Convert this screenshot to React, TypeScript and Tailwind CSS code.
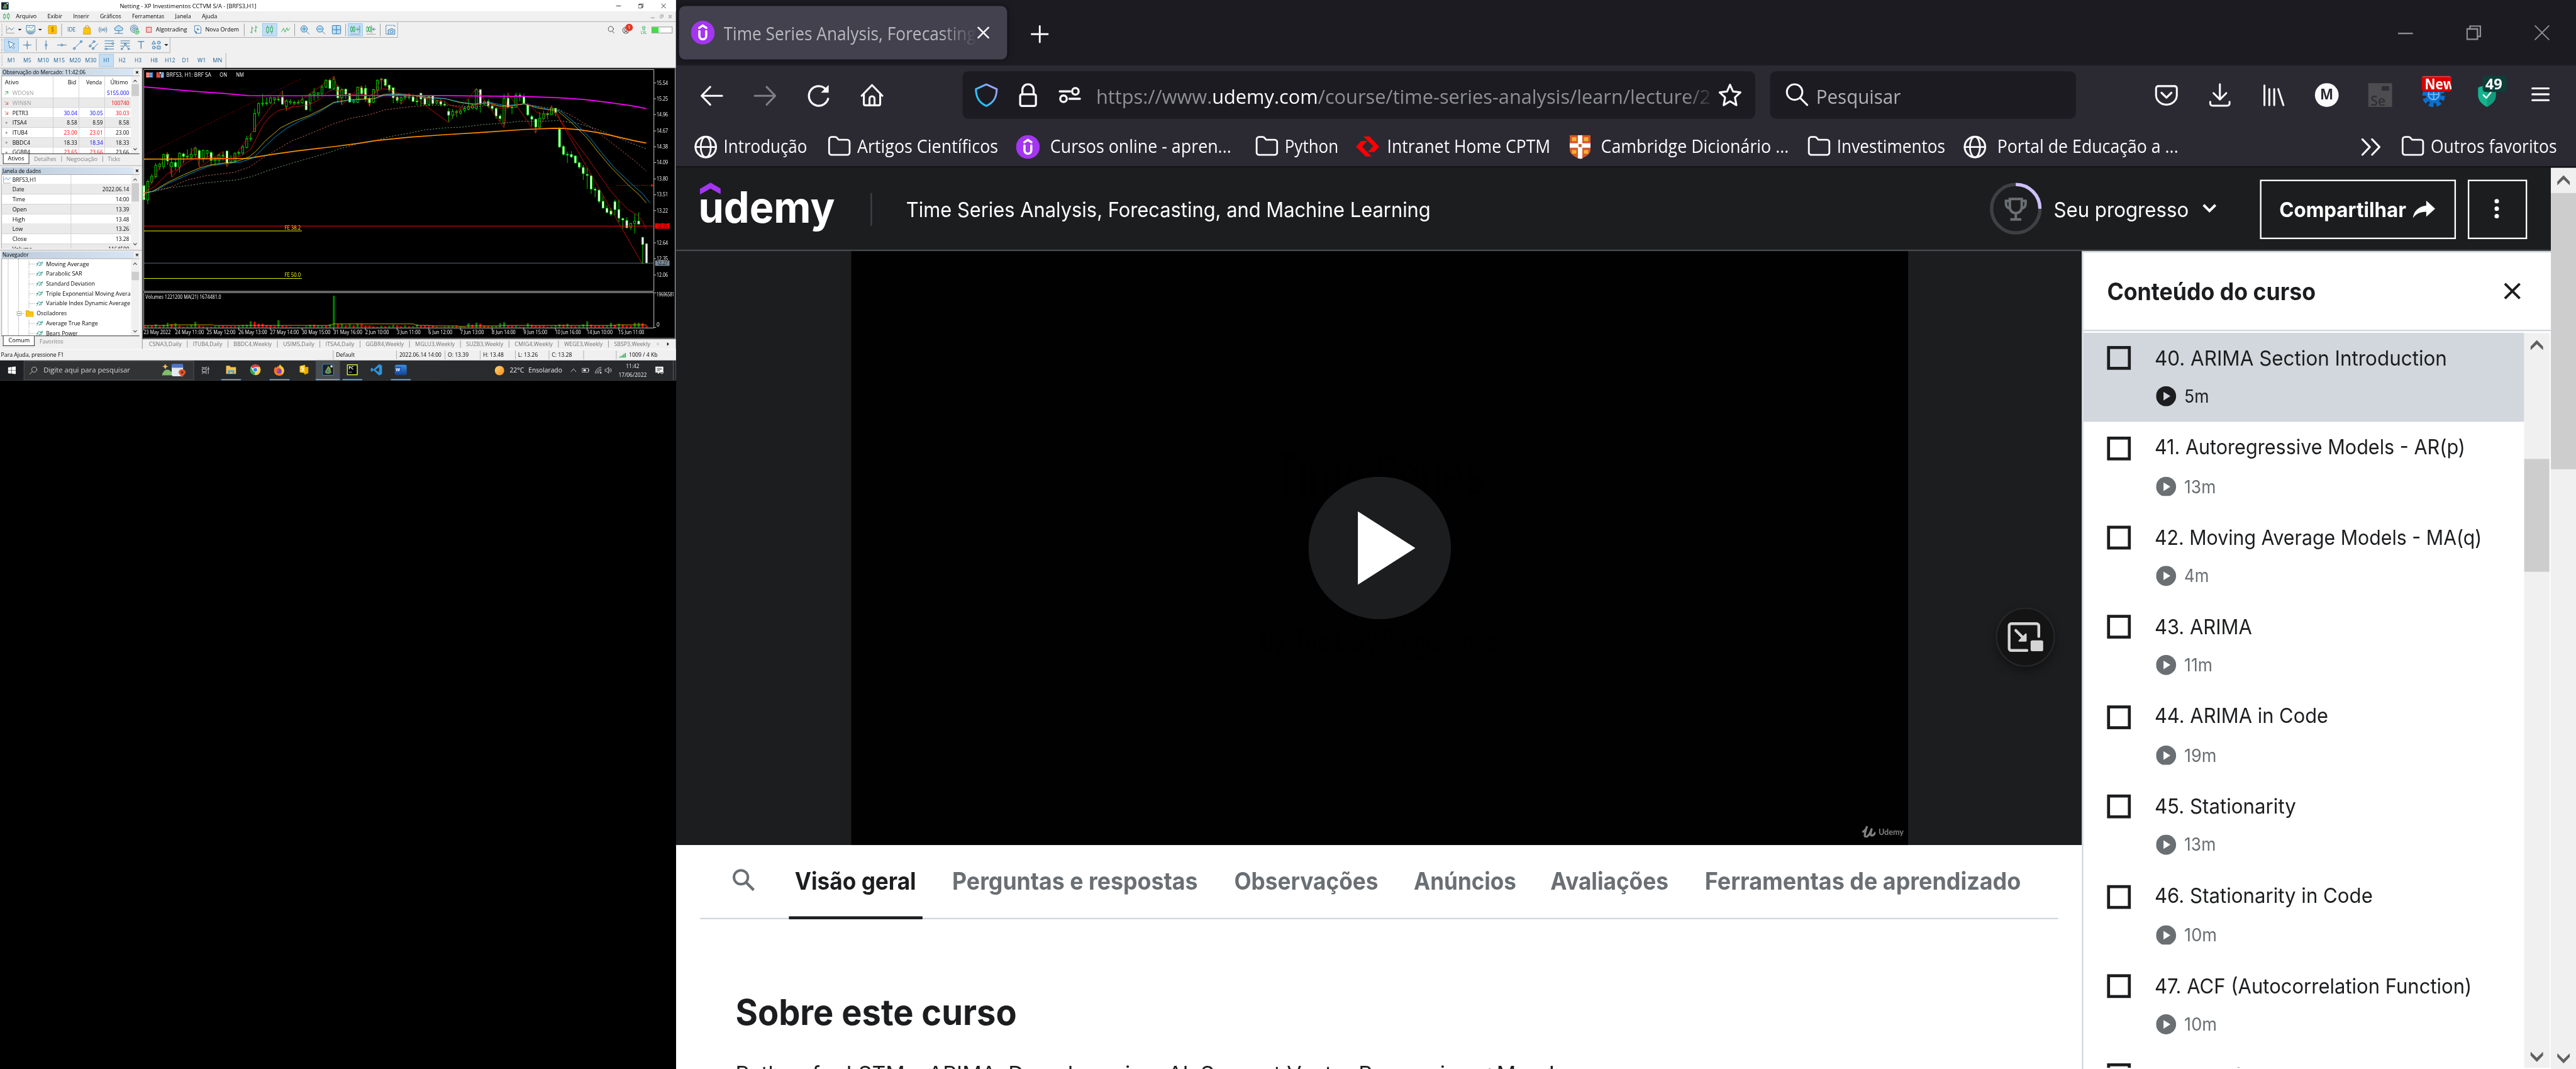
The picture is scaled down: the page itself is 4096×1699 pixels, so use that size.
import React, { useLayoutEffect, useRef, useState } from "react";

/* ------------------------------------------------------------------ */
/* Shared helpers                                                      */
/* ------------------------------------------------------------------ */

/** One line of text condensed or expanded to an exact width. */
function Fit({ w, children, className = "" }: { w: number; children: React.ReactNode; className?: string }) {
  const outer = useRef<HTMLSpanElement>(null);
  const inner = useRef<HTMLSpanElement>(null);
  const [ratio, setRatio] = useState(1);
  useLayoutEffect(() => {
    const o = outer.current!.getBoundingClientRect().width;
    const i = inner.current!.getBoundingClientRect().width;
    if (i > 0) setRatio(o / i);
  }, []);
  return (
    <span ref={outer} className={`block shrink-0 whitespace-nowrap ${className}`} style={{ width: w }}>
      <span ref={inner} className="inline-block origin-left" style={{ transform: `scaleX(${ratio})` }}>
        {children}
      </span>
    </span>
  );
}

function Svg({ box = "0 0 16 16", className = "", children }: { box?: string; className?: string; children: React.ReactNode }) {
  return (
    <svg viewBox={box} className={`block shrink-0 ${className}`} fill="none" stroke="currentColor" strokeWidth={1} strokeLinecap="round" strokeLinejoin="round">
      {children}
    </svg>
  );
}

/* ------------------------------------------------------------------ */
/* Trading terminal: chart                                             */
/* ------------------------------------------------------------------ */

type P = [number, number];

// Prices are kept on a grid of 2.24 columns and 3 rows per pixel;
// the second half of every series starts again at x = 680.
const px = (x: number, half: 0 | 1) => 680 * half + x / 2.24;
const line = (left: P[], right: P[]) =>
  [...left.map(([x, y]) => `${px(x, 0).toFixed(1)},${(y / 3).toFixed(1)}`), ...right.map(([x, y]) => `${px(x, 1).toFixed(1)},${(y / 3).toFixed(1)}`)].join(" ");

const YELLOW = line(
  [[651, 1170], [690, 1160], [760, 1105], [830, 1060], [900, 1020], [950, 1000], [1010, 988], [1060, 982], [1100, 965], [1130, 948], [1160, 915], [1200, 855], [1270, 775], [1330, 735], [1400, 700], [1460, 660], [1510, 620]],
  [[0, 617], [60, 605], [130, 598], [170, 598], [215, 572], [260, 568], [340, 578], [400, 588], [490, 597], [560, 622], [620, 632], [690, 622], [740, 645], [800, 640], [850, 630], [910, 655], [960, 665], [1000, 670], [1060, 738], [1130, 830], [1190, 930], [1240, 1010], [1320, 1120], [1370, 1180], [1403, 1230]],
);
const BLUE = line(
  [[660, 1170], [700, 1158], [760, 1112], [840, 1065], [900, 1030], [950, 1005], [1030, 990], [1090, 982], [1150, 955], [1190, 900], [1250, 825], [1300, 775], [1370, 725], [1430, 690], [1510, 625]],
  [[0, 621], [60, 607], [170, 600], [230, 572], [330, 576], [400, 590], [500, 600], [560, 618], [620, 630], [700, 622], [760, 640], [850, 630], [920, 650], [960, 663], [1010, 668], [1080, 745], [1150, 840], [1200, 925], [1260, 1020], [1340, 1120], [1385, 1172], [1420, 1230]],
);
const RED_MA = line(
  [[651, 1170], [700, 1130], [760, 1050], [800, 1030], [850, 980], [884, 960], [902, 962], [940, 950], [1000, 957], [1045, 962], [1090, 945], [1135, 905], [1160, 840], [1190, 760], [1220, 710], [1260, 670], [1320, 650], [1400, 635], [1450, 600], [1480, 560], [1510, 540]],
  [[0, 550], [35, 552], [70, 578], [100, 565], [150, 580], [190, 548], [210, 538], [245, 542], [280, 565], [330, 573], [400, 595], [490, 615], [510, 635], [560, 655], [600, 650], [650, 628], [690, 625], [740, 658], [780, 648], [850, 625], [880, 640], [905, 680], [930, 690], [1000, 685], [1010, 720], [1060, 820], [1130, 945], [1190, 1060], [1240, 1155], [1270, 1202], [1320, 1270], [1365, 1305], [1385, 1340], [1403, 1390]],
);
const ZIGZAG = line(
  [[651, 1197], [757, 925], [778, 1075], [884, 890], [902, 1015], [1009, 918], [1027, 1010], [1278, 552], [1297, 670], [1512, 463]],
  [[24, 637], [113, 520], [149, 645], [203, 473], [293, 632], [328, 567], [507, 742], [633, 537], [758, 773], [776, 563], [901, 807], [973, 640], [1130, 1005], [1260, 1310], [1385, 1600]],
);
const SALMON = line(
  [[660, 1170], [750, 1145], [850, 1090], [930, 1065], [1060, 1045], [1130, 1012], [1180, 965], [1230, 925], [1320, 855], [1440, 790], [1510, 750]],
  [[0, 745], [60, 718], [150, 695], [220, 665], [330, 648], [420, 638], [500, 637], [620, 650], [700, 635], [780, 645], [850, 630], [960, 655], [1000, 660], [1070, 705], [1150, 770], [1250, 870], [1350, 975], [1403, 1037]],
);
const SAGE = line(
  [[651, 1170], [740, 1142], [850, 1125], [920, 1110], [1070, 1090], [1135, 1072], [1210, 1035], [1330, 985], [1450, 940], [1510, 915]],
  [[0, 907], [100, 870], [170, 855], [240, 828], [330, 807], [400, 787], [490, 775], [570, 770], [660, 755], [740, 748], [830, 735], [940, 735], [1000, 730], [1100, 750], [1160, 775], [1240, 815], [1320, 860], [1403, 902]],
);
const MAGENTA = "291,175.5 322,178 350,181 400,185 450,188.5 500,193 600,193.5 690,192.7 890,193 980,194 1060,195 1130,197.5 1180,201 1230,207 1275,213.5 1306,219";
const ORANGE = "291,321.5 500,320 550,312 600,305 650,299 680,295.5 722,290 760,284 830,277 900,272 980,267 1060,261.5 1120,259 1140,259.5 1170,262 1210,268 1250,277 1280,284 1306,289";
const VOLUME_MA = line(
  [[651, 1972], [765, 1972], [767, 1969], [965, 1969], [967, 1972], [1495, 1972], [1510, 1963]],
  [[0, 1963], [348, 1963], [362, 1972], [425, 1972], [430, 1975], [550, 1975], [555, 1978], [585, 1978], [588, 1975], [745, 1975], [750, 1972], [1265, 1972], [1270, 1969], [1403, 1969]],
);

// high, body top, body bottom, low, falling (1) or rising (0)
const CANDLES: [number, number, number, number, 0 | 1][] = [
  [1118, 1125, 1210, 1212, 1], [1090, 1100, 1212, 1238, 0], [1055, 1068, 1103, 1112, 0], [988, 1003, 1070, 1082, 0], [985, 995, 1010, 1030, 0],
  [930, 937, 1010, 1025, 0], [925, 935, 975, 1000, 1], [955, 985, 1010, 1070, 0], [960, 985, 1010, 1030, 1], [922, 928, 1012, 1045, 0],
  [925, 933, 948, 990, 1], [905, 947, 951, 965, 1], [897, 935, 953, 960, 0], [888, 897, 937, 955, 0], [905, 913, 963, 1012, 1],
  [905, 912, 960, 985, 0], [908, 912, 930, 958, 0], [915, 925, 972, 1000, 1], [955, 965, 973, 1000, 0], [930, 940, 972, 990, 0],
  [918, 942, 946, 975, 0], [915, 915, 990, 1010, 1], [940, 963, 985, 990, 0], [922, 930, 975, 985, 0], [915, 925, 930, 945, 0],
  [880, 890, 927, 940, 0], [822, 840, 893, 900, 0], [808, 838, 843, 858, 0], [660, 688, 797, 797, 0], [620, 628, 686, 705, 0],
  [570, 625, 630, 645, 0], [590, 623, 628, 640, 0], [585, 594, 622, 632, 0], [590, 592, 603, 632, 0], [580, 602, 605, 615, 0],
  [550, 590, 632, 635, 1], [600, 612, 645, 672, 0], [600, 615, 622, 635, 0], [610, 620, 625, 637, 0], [605, 620, 625, 635, 0],
  [585, 603, 622, 630, 0], [610, 612, 665, 668, 1], [565, 572, 625, 675, 0], [533, 560, 575, 610, 0], [560, 563, 570, 600, 0],
  [515, 527, 570, 570, 0], [480, 487, 527, 535, 0], [478, 487, 535, 538, 1], [462, 480, 535, 548, 0], [515, 527, 592, 620, 1],
  [535, 543, 592, 635, 0], [535, 541, 570, 600, 1], [565, 567, 618, 622, 1], [600, 612, 620, 628, 0], [525, 528, 620, 625, 0],
  [518, 532, 568, 575, 1], [515, 535, 600, 618, 1], [585, 598, 622, 645, 1], [538, 543, 620, 625, 0], [480, 487, 545, 575, 0],
  [472, 478, 482, 540, 0], [480, 480, 517, 527, 1], [512, 517, 545, 560, 1], [530, 532, 592, 625, 1], [575, 590, 608, 625, 1],
  [585, 592, 608, 632, 0], [575, 585, 592, 605, 0], [565, 587, 592, 605, 0], [570, 587, 614, 618, 1], [580, 613, 617, 637, 1],
  [562, 565, 600, 640, 1], [575, 595, 632, 637, 1], [578, 585, 633, 643, 0], [575, 580, 627, 637, 1], [605, 612, 625, 635, 0],
  [600, 616, 632, 645, 1], [613, 632, 637, 645, 1], [655, 675, 698, 740, 1], [660, 676, 698, 720, 0], [665, 677, 682, 710, 0],
  [660, 673, 686, 695, 0], [645, 658, 668, 682, 0], [600, 645, 662, 670, 0], [625, 640, 655, 662, 0], [535, 543, 657, 668, 0],
  [540, 543, 632, 683, 1], [610, 617, 630, 640, 0], [600, 615, 642, 655, 1], [632, 642, 657, 670, 1], [650, 657, 703, 720, 1],
  [690, 703, 718, 735, 1], [570, 595, 748, 770, 0], [562, 595, 650, 660, 1], [640, 650, 653, 692, 0], [562, 577, 650, 650, 0],
  [562, 577, 583, 615, 1], [568, 585, 628, 633, 1], [625, 637, 695, 705, 1], [695, 706, 722, 765, 1], [718, 723, 770, 805, 1],
  [680, 717, 771, 775, 0], [672, 691, 718, 725, 0], [680, 690, 694, 722, 1], [640, 655, 695, 695, 0], [655, 656, 682, 705, 1],
  [772, 783, 890, 897, 1], [877, 888, 935, 945, 1], [920, 935, 939, 988, 1], [915, 937, 950, 958, 1], [945, 945, 987, 990, 1],
  [982, 987, 1013, 1025, 1], [1000, 1015, 1052, 1090, 1], [1017, 1057, 1063, 1145, 1], [1060, 1066, 1145, 1175, 1], [1135, 1147, 1152, 1195, 1],
  [1150, 1152, 1220, 1233, 1], [1188, 1220, 1260, 1265, 1], [1243, 1262, 1287, 1293, 1], [1262, 1278, 1298, 1310, 1], [1210, 1222, 1270, 1305, 1],
  [1213, 1270, 1322, 1347, 1], [1318, 1325, 1333, 1385, 1], [1317, 1336, 1380, 1383, 1], [1350, 1354, 1377, 1393, 0], [1295, 1340, 1354, 1415, 0],
  [1287, 1340, 1358, 1358, 1], [1437, 1438, 1482, 1600, 1], [1475, 1477, 1594, 1595, 1],
];

const VOLUMES =
  "9r 11g 13r 21g 9r 18g 30g 21r 27g 12r 6r 9g 17g 36g 12r 9r 6g 6r 9g 12g 12r 9r 9r 9r 12g 17g 18g 39g 36r 24r 24r 14r 14r 9r 45g 12r 9r 6r 3r 6g 3r 9g 18g 18r 14g 12g 13r 21g 194g 21r 22g 14r 21g 14r 22g 22r 14r 14r 9r 6r 12g 9r 12g 18g 14r 9r 15g 9r 9g 21g 12r 12r 12r 12r 6r 3r 6g 9g 10g 10r 6g 3r 27g 18r 30g 24r 12r 9r 9g 9g 27g 33g 12r 12r 12g 6r 6g 27g 18r 12r 12r 12r 6r 9g 14g 21g 18r 24g 12r 9r 13g 21g 39g 18r 12r 12r 12r 14g 30g 18r 24g 18r 12r 12r 30g 30g 27r 12r".split(" ");

const PRICES: [string, number][] = [
  ["15.54", 167], ["15.25", 199], ["14.96", 231], ["14.67", 264], ["14.38", 296], ["14.09", 328], ["13.80", 361],
  ["13.51", 393], ["13.22", 425], ["12.64", 490], ["12.35", 522], ["12.06", 555],
];

const DATES: [string, number][] = [
  ["23 May 2022", 55], ["24 May 11:00", 58], ["25 May 12:00", 58], ["26 May 13:00", 58], ["27 May 14:00", 58], ["30 May 15:00", 58],
  ["31 May 16:00", 58], ["2 Jun 10:00", 48], ["3 Jun 11:00", 48], ["6 Jun 12:00", 48], ["7 Jun 13:00", 48], ["8 Jun 14:00", 48],
  ["9 Jun 15:00", 48], ["10 Jun 16:00", 52], ["14 Jun 10:00", 52], ["15 Jun 11:00", 52],
];

function PriceChart() {
  return (
    <svg viewBox="287 137 1079 548" className="block h-[548px] w-[1079px] bg-black font-['Open_Sans',sans-serif] text-[10.500px] font-medium" fill="none">
      <g stroke="#fff">
        <path d="M290.5 662.5V591H1321.5V662.5H290.5M290.5 588.5V140.5H1321.5V588.5H290.5" />
        {PRICES.map(([p, y]) => <path key={p} d={`M1322 ${y + 0.5}h4`} />)}
        {DATES.map(([d], i) => <path key={d} d={`M${290.5 + i * 64} 663v4`} />)}
        <path d="M1322 591.5h4M1322 661.5h4" />
      </g>
      {CANDLES.map(([h, t, b, l, down], i) => {
        const x = 290.7 + i * 8;
        return (
          <g key={i} stroke="#00ff00">
            <path d={`M${x} ${h / 3}V${l / 3}`} />
            <rect x={x - 2} y={t / 3} width={4} height={Math.max(1, (b - t) / 3)} fill={down ? "#fff" : "#000"} />
          </g>
        );
      })}
      <path d="M292 313.5L607 159.5" stroke="#f00" strokeDasharray="2 4" />
      <polyline points={SALMON} stroke="#f08070" strokeDasharray="3 3" />
      <polyline points={SAGE} stroke="#8fbc8f" strokeDasharray="3 3" />
      <polyline points={MAGENTA} stroke="#ff00ff" strokeWidth={2.2} />
      <polyline points={ORANGE} stroke="#ff8c00" strokeWidth={2.2} />
      <polyline points={YELLOW} stroke="#ffd700" />
      <polyline points={BLUE} stroke="#00b4ff" />
      <polyline points={RED_MA} stroke="#f01010" />
      <polyline points={ZIGZAG} stroke="#f01010" />
      <path d="M291 466.5H610M291 562.5H610" stroke="#ff0" strokeWidth={1.2} />
      <text x={575} y={463.5} textLength={33} lengthAdjust="spacingAndGlyphs" fill="#ff0">FE 38.2</text>
      <text x={575} y={559.5} textLength={33} lengthAdjust="spacingAndGlyphs" fill="#ff0">FE 50.0</text>
      <path d="M291 456.5H1326" stroke="#f00" strokeWidth={1.3} />
      <path d="M291 531.5H1321" stroke="#778899" />
      <path d="M1246 374.5H1318" stroke="#f00" strokeDasharray="3 2" />
      <path d="M1316 371l5 3.5l-5 3.5z" fill="#f00" />
      {VOLUMES.map((v, i) => {
        const h = parseInt(v) / 3;
        return <rect key={i} x={i === 0 ? 291 : 288.7 + i * 8} y={662 - h} width={4} height={h} fill={v.endsWith("g") ? "#008000" : "#f00"} />;
      })}
      <polyline points={VOLUME_MA} stroke="#ffd700" />
      <g fill="#fff">
        {PRICES.map(([p, y]) => <text key={p} x={1327} y={y + 4} textLength={23} lengthAdjust="spacingAndGlyphs">{p}</text>)}
        <text x={1327} y={599} textLength={36} lengthAdjust="spacingAndGlyphs">19696581</text>
        <text x={1327} y={660}>0</text>
        {DATES.map(([d, w], i) => <text key={d} x={290 + i * 64} y={675.5} textLength={w} lengthAdjust="spacingAndGlyphs">{d}</text>)}
        <text x={336} y={155.5} textLength={91} lengthAdjust="spacingAndGlyphs">BRFS3, H1: BRF SA</text>
        <text x={444} y={155.5} textLength={15} lengthAdjust="spacingAndGlyphs">ON</text>
        <text x={477} y={155.5} textLength={16} lengthAdjust="spacingAndGlyphs">NM</text>
        <text x={294} y={603.5} textLength={153} lengthAdjust="spacingAndGlyphs">Volumes 1221200 MA(21) 1674481.0</text>
      </g>
      <rect x={1324} y={451} width={29} height={11} fill="#f00" />
      <text x={1327} y={460.5} textLength={23} lengthAdjust="spacingAndGlyphs" fill="#000">12.95</text>
      <rect x={1324} y={526} width={29} height={11} fill="#778899" />
      <text x={1327} y={535.5} textLength={23} lengthAdjust="spacingAndGlyphs" fill="#000">12.27</text>
      <path d="M295 146h7v11h-7z" fill="#e04a3f" />
      <path d="M302 146h7v11h-7z" fill="#1d6fb8" />
      <path d="M296 148.5h12M296 151.5h12M296 154.5h12" stroke="#fff" />
      <path d="M316 146h5v4h3v7h-8z" fill="#e04a3f" />
      <path d="M325 150h2v-4h4v11h-6z" fill="#7cc0ee" />
      <path d="M322 146h4v3h-4z" fill="#fff" />
      <path d="M287.5 137V685M1364.5 137V685M289 683.5H1364" stroke="#e8e8e8" />
      <path d="M287 137.5H1366" stroke="#808080" />
    </svg>
  );
}

/* ------------------------------------------------------------------ */
/* Trading terminal: toolbars                                          */
/* ------------------------------------------------------------------ */

function Cell({ active, children, className = "w-8" }: { active?: boolean; children: React.ReactNode; className?: string }) {
  return (
    <div className={`flex h-[26px] shrink-0 items-center justify-center ${className}`}>
      <div className={`flex h-[26px] items-center justify-center px-[3px] ${active ? "min-w-[30px] border border-[#8cc4f0] bg-[#c4def4]" : ""}`}>{children}</div>
    </div>
  );
}

const Sep = ({ className = "" }: { className?: string }) => <div className={`h-[25px] w-px shrink-0 bg-[#8a8a8a] ${className}`} />;
const Grip = () => <div className="h-6 w-0 shrink-0 border-l-2 border-dotted border-[#bdbdbd]" />;
const Caret = ({ className = "" }: { className?: string }) => (
  <Svg box="0 0 8 4" className={`h-1 w-2 ${className}`}><path d="M0 0h8l-4 4z" fill="#222" stroke="none" /></Svg>
);

const ICON = "h-5 w-5 text-[#1a6098]";

function MainToolbar() {
  return (
    <div className="flex h-8 items-center">
      <div className="flex h-[31px] w-[804px] items-center border-r border-b border-[#a0a0a0] pl-[3px]">
        <Grip />
        <Svg box="0 0 20 20" className="ml-[6px] h-5 w-5 text-[#1a6098]"><path d="M2 2v15h16" stroke="#888" /><path d="M4 10l4-4 4 5 5-5" /></Svg>
        <Caret className="ml-[5px]" />
        <Svg box="0 0 20 20" className="ml-2 h-5 w-5 text-[#1a6098]"><rect x="1.5" y="1.5" width="17" height="13" rx="1" fill="#fff" /><path d="M4 6l3-2 4 3 5-4" /><path d="M4 13v-2M7 13v-3M10 13v-2M13 13v-3M16 13v-4" stroke="#12a13a" /><path d="M3 16.500h14M6 18.500h8" /></Svg>
        <Caret className="ml-[5px]" />
        <Svg box="0 0 18 18" className="ml-[12px] h-[18px] w-[18px]"><rect x=".5" y=".5" width="17" height="17" rx="2" fill="#fdc60a" stroke="#c98a00" /><path d="M12 5.500c-1-1.500-5.500-1.600-5.500 1s5.500 1.500 5.500 4-4.500 2.500-5.500.8M9 3v12" stroke="#a86b00" /></Svg>
        <Sep className="ml-[9px]" />
        <div className="ml-[3px] flex">
          <Cell><Fit w={17} className="text-[12px] text-[#1a6098]">IDE</Fit></Cell>
          <Cell><Svg box="0 0 20 20" className="h-5 w-5"><path d="M7 7V3c0-2 6-2 6 0v4" stroke="#a86b00" /><path d="M4 6h12l1 13H3z" fill="#fdc60a" stroke="#c98a00" /></Svg></Cell>
          <Cell><Svg box="0 0 20 20" className={ICON}><circle cx="10" cy="10" r="2" /><path d="M6.500 6.500a5 5 0 000 7M13.500 6.500a5 5 0 010 7M4 4.500a8 8 0 000 11M16 4.500a8 8 0 010 11" /></Svg></Cell>
          <Cell><Svg box="0 0 20 20" className={ICON}><path d="M5 12a3.500 3.500 0 010-7 5 5 0 019.500 0A3.500 3.500 0 0115 12z" fill="#b9e0fa" /><path d="M10 12v5M2 17.500h16" /></Svg></Cell>
          <Cell><Svg box="0 0 20 20" className={ICON}><circle cx="9" cy="8" r="7.500" /><circle cx="9" cy="8" r="4.500" /><circle cx="9" cy="8" r="1.500" /><circle cx="14.500" cy="14.500" r="4.500" fill="#dff5e1" stroke="#12a13a" /><path d="M14.500 12v5M12 14.500h5" stroke="#12a13a" /></Svg></Cell>
        </div>
        <Svg box="0 0 12 12" className="ml-[7px] h-3 w-3"><rect x=".8" y=".8" width="10.400" height="10.400" fill="#f7cfcb" stroke="#d13b2e" strokeWidth={1.300} /></Svg>
        <Fit w={63} className="ml-[8px] text-[12px]">Algotrading</Fit>
        <Svg box="0 0 16 20" className="ml-[14px] h-5 w-4 text-[#1a6098]"><path d="M2 2h9l3 3v12H5l-3-3z" fill="#fff" /><path d="M8 6v6M5 9h6M2 14l3 4v-4z" /></Svg>
        <Fit w={68} className="ml-[7px] text-[12px]">Nova Ordem</Fit>
        <Sep className="ml-[10px]" />
        <div className="ml-[3px] flex">
          <Cell><Svg box="0 0 20 20" className="h-5 w-5 text-[#12a13a]"><path d="M6 4v13M3 15h3M6 7h3M14 2v13M11 12h3M14 5h3" /></Svg></Cell>
          <Cell active><Svg box="0 0 20 20" className="h-5 w-5 text-[#12a13a]"><rect x="4" y="5" width="4" height="10" /><rect x="12" y="5" width="4" height="9" /><path d="M6 2v3M6 15v3M14 1v4M14 14v4" /></Svg></Cell>
          <Cell><Svg box="0 0 20 20" className="h-5 w-5 text-[#12a13a]"><path d="M2 14l4-7 3 8 4-9 2 6 4-5" /></Svg></Cell>
        </div>
        <Sep className="ml-[2px]" />
        <div className="ml-[4px] flex">
          <Cell><Svg box="0 0 20 20" className={ICON}><circle cx="8.500" cy="8.500" r="6.500" fill="#b9e0fa" /><path d="M13 13l6 6M8.500 5v7M5 8.500h7" /></Svg></Cell>
          <Cell><Svg box="0 0 20 20" className={ICON}><circle cx="8.500" cy="8.500" r="6.500" fill="#b9e0fa" /><path d="M13 13l6 6M5 8.500h7" /></Svg></Cell>
          <Cell><Svg box="0 0 20 20" className={ICON}><rect x="1.500" y="1.500" width="17" height="17" rx="1.500" fill="#b9e0fa" /><path d="M10 2v16M2 10h16" /></Svg></Cell>
        </div>
        <Sep className="ml-[2px]" />
        <div className="ml-[3px] flex">
          <Cell active><Svg box="0 0 20 20" className="h-5 w-5 text-[#12a13a]"><rect x="1" y="5" width="3" height="8" /><rect x="6" y="5" width="3" height="8" /><path d="M2.500 3v2M7.500 3v2M2.500 13v2M7.500 13v2M11 9h6M14 6l3 3-3 3" /><path d="M19 2v14" stroke="#1a6098" /><path d="M1 19h18" stroke="#888" /></Svg></Cell>
          <Cell><Svg box="0 0 20 20" className="h-5 w-5 text-[#12a13a]"><rect x="1" y="5" width="3" height="8" /><rect x="6" y="5" width="3" height="8" /><path d="M2.500 3v2M7.500 3v2M2.500 13v2M7.500 13v2" /><path d="M11 2v14M19 9h-6M16 6l-3 3 3 3" stroke="#1a6098" /><path d="M1 19h18" stroke="#888" /></Svg></Cell>
        </div>
        <Sep className="ml-[2px]" />
        <Svg box="0 0 20 20" className="ml-[10px] h-5 w-5 text-[#1a6098]"><path d="M5 19H1V1h18v5" strokeDasharray="2.500 2" /><path d="M6 10h3l1.500-2h4L16 10h3v9H6z" fill="#b9e0fa" /><circle cx="12.500" cy="14" r="2.500" fill="#fff" /></Svg>
      </div>
      <Svg box="0 0 14 18" className="ml-[424px] h-[17px] w-[14px] text-[#222]"><circle cx="6.500" cy="7" r="5.500" /><path d="M10 12l3.500 4" /></Svg>
      <div className="relative ml-[15px]">
        <Svg box="0 0 16 16" className="h-4 w-4 text-[#222]"><circle cx="8" cy="8" r="6.500" /><circle cx="8" cy="7" r="3" /><path d="M4 13c1-3 7-3 8 0" /></Svg>
        <div className="absolute -top-[5px] left-[7px] flex h-[15px] w-[15px] items-center justify-center rounded-full bg-[#e03a26] text-[10px] text-white">1</div>
      </div>
      <div className="ml-[22px] flex flex-col items-center text-[#12a13a]">
        <Svg box="0 0 8 9" className="h-[9px] w-2"><path d="M2.500 8.500v-5h-2L4 .5l3.500 3h-2v5z" /></Svg>
        <Fit w={12} className="text-[8px] leading-[8px]">LVL</Fit>
      </div>
      <div className="ml-[10px] h-[13px] w-[42px] border border-[#777] bg-white"><div className="h-full w-[13px] bg-[#3fe03f]" /></div>
    </div>
  );
}

function DrawToolbar() {
  const node = "#b9e0fa";
  return (
    <div className="flex h-[31px] w-[344px] items-center border-r border-b border-[#a0a0a0] pl-[3px]">
      <Grip />
      <div className="ml-[2px] flex">
        <Cell active><Svg box="0 0 20 20" className={ICON}><path d="M4 3l3 13 3-4 4 5 2-2-4-5 4-2z" fill="#fff" /></Svg></Cell>
        <Cell><Svg box="0 0 20 20" className={ICON}><path d="M10 2v16M2 10h16" /><circle cx="10" cy="10" r="2" fill={node} /></Svg></Cell>
      </div>
      <Sep className="ml-[2px]" />
      <div className="ml-[3px] flex">
        <Cell><Svg box="0 0 20 20" className={ICON}><path d="M10 1v18" /><circle cx="10" cy="10" r="2" fill={node} /></Svg></Cell>
        <Cell><Svg box="0 0 20 20" className={ICON}><path d="M1 10h18" /><circle cx="10" cy="10" r="2" fill={node} /></Svg></Cell>
        <Cell><Svg box="0 0 20 20" className={ICON}><path d="M3 17L17 3" /><circle cx="3" cy="17" r="2" fill={node} /><circle cx="17" cy="3" r="2" fill={node} /></Svg></Cell>
        <Cell><Svg box="0 0 20 20" className={ICON}><path d="M3 11l9-9M9 17l10-10" /><circle cx="3" cy="12" r="2" fill={node} /><circle cx="11" cy="3" r="2" fill={node} /><circle cx="9" cy="17" r="2" fill={node} /></Svg></Cell>
        <Cell><Svg box="0 0 20 20" className={ICON}><path d="M1 1.500h18M1 7h14M1 12.500h18M5 18h14" /><circle cx="17" cy="7" r="2" fill={node} /><circle cx="3" cy="18" r="2" fill={node} /></Svg></Cell>
        <Cell><Svg box="0 0 20 20" className={ICON}><path d="M1 1.500h18M1 6h18M4 17l6-7 7 7M1 12h5M14 12h5" /><circle cx="10" cy="9" r="2" fill={node} /><circle cx="3" cy="18" r="1.500" fill={node} /><circle cx="17" cy="18" r="1.500" fill={node} /></Svg></Cell>
        <Cell><Svg box="0 0 20 20" className={ICON}><path d="M4 3h12M10 3v14" strokeWidth={1.300} /></Svg></Cell>
        <Cell className="w-[29px]"><Svg box="0 0 20 20" className={ICON}><path d="M5 2l3.500 6h-7z" fill={node} /><circle cx="15" cy="5" r="3" fill={node} /><circle cx="5" cy="15" r="3" fill={node} /><rect x="12" y="12" width="6" height="6" fill={node} /></Svg></Cell>
      </div>
      <Caret className="ml-[2px]" />
    </div>
  );
}

const FRAMES: [string, number][] = [["M1", 16], ["M5", 16], ["M10", 23], ["M15", 23], ["M20", 23], ["M30", 23], ["H1", 13], ["H2", 14], ["H3", 14], ["H8", 15], ["H12", 21], ["D1", 14], ["W1", 17], ["MN", 19]];

function FrameToolbar() {
  return (
    <div className="flex h-[31px] w-[457px] items-center border-r border-[#a0a0a0] pl-[3px]">
      <Grip />
      <div className="ml-[2px] flex text-[12px] text-[#1a6098]">
        {FRAMES.map(([f, w]) => <Cell key={f} active={f === "H1"}><Fit w={w}>{f}</Fit></Cell>)}
      </div>
    </div>
  );
}

/* ------------------------------------------------------------------ */
/* Trading terminal: side panels                                       */
/* ------------------------------------------------------------------ */

function PanelTitle({ w, children }: { w: number; children: string }) {
  return (
    <div className="flex h-[14px] items-center">
      <div className="flex h-[14px] w-[267px] items-center bg-linear-to-r from-[#bccbdb] to-[#d8e5f3] pl-[2px] text-[12px] leading-[14px]"><Fit w={w}>{children}</Fit></div>
      <Svg box="0 0 6 6" className="ml-[4px] h-[6px] w-[6px] text-black"><path d="M.8.800l4.400 4.400M5.200.8L.8 5.200" strokeWidth={1.500} /></Svg>
    </div>
  );
}

function MiniScroll({ track, thumb }: { track: string; thumb: string }) {
  return (
    <div className="flex w-[16px] shrink-0 flex-col items-center justify-between bg-[#f0f0f0] text-[#505050]">
      <div className="flex w-full flex-col items-center">
        <Svg box="0 0 8 5" className="mt-[7px] h-[5px] w-2"><path d="M.8 4.500L4 1l3.200 3.500" strokeWidth={1.500} /></Svg>
        <div className={`w-[15px] bg-[#cdcdcd] ${track} ${thumb}`} />
      </div>
      <Svg box="0 0 8 5" className="mb-[6px] h-[5px] w-2"><path d="M.8.500L4 4 7.200.5" strokeWidth={1.500} /></Svg>
    </div>
  );
}

const BLUE_T = "text-[#0000ff]";
const RED_T = "text-[#ff0000]";
const QUOTES: [string, string, number, string, string, string, string, string, string, number][] = [
  ["up", "WDO$N", 43, "", "", "", "", "5155.000", BLUE_T, 45],
  ["down", "WIN$N", 38, "", "", "", "", "100740", RED_T, 36],
  ["down", "PETR3", 32, "30.04", BLUE_T, "30.05", BLUE_T, "30.03", RED_T, 27],
  ["dot", "ITSA4", 29, "8.58", "", "8.59", "", "8.58", "", 21],
  ["dot", "ITUB4", 31, "23.00", RED_T, "23.01", RED_T, "23.00", "", 27],
  ["dot", "BBDC4", 36, "18.33", "", "18.34", BLUE_T, "18.33", "", 27],
  ["dot", "GGBR4", 36, "23.65", RED_T, "23.66", RED_T, "23.66", "", 27],
];

function Trend({ kind }: { kind: string }) {
  if (kind === "dot") return <div className="mx-[3px] h-1 w-1 rounded-full bg-[#9a9a9a]" />;
  return kind === "up"
    ? <Svg box="0 0 8 8" className="mx-[1px] h-2 w-2 text-[#12a13a]"><path d="M1 7l6-6M2 1h5v5" /></Svg>
    : <Svg box="0 0 8 8" className="mx-[1px] h-2 w-2 text-[#d13b2e]"><path d="M1 1l6 6M2 7h5V2" /></Svg>;
}

const COL = "flex h-full w-[52px] items-center justify-end border-r border-[#c8c8c8] pr-[3px]";

function MarketWatch() {
  return (
    <div className="flex h-[196px] flex-col pt-px pl-[3px]">
      <PanelTitle w={168}>Observação do Mercado: 11:42:06</PanelTitle>
      <div className="flex h-[157px] w-[279px] overflow-hidden border-t border-l border-[#8a8a8a] bg-white text-[12px]">
        <div className="w-[261px] shrink-0">
          <div className="flex h-[24px] items-center">
            <div className="flex h-full w-[104px] items-center border-r border-[#c8c8c8] pl-[6px]"><Fit w={28}>Ativo</Fit></div>
            <div className={`${COL} pr-[5px]`}><Fit w={17}>Bid</Fit></div>
            <div className={`${COL} pr-[5px]`}><Fit w={32}>Venda</Fit></div>
            <div className="flex grow justify-end pr-[6px]"><Fit w={36}>Último</Fit></div>
          </div>
          {QUOTES.map(([kind, name, nw, bid, bc, ask, ac, last, lc, lw], i) => (
            <div key={name} className={`flex h-[20px] items-center border-b border-[#c8c8c8] ${i % 2 ? "bg-[#eaeaea]" : "bg-white"}`}>
              <div className="flex h-full w-[104px] items-center border-r border-[#c8c8c8] pl-[4px]">
                <Trend kind={kind} />
                <Fit w={nw} className={`ml-[7px] ${i < 2 ? "text-[#a0a0a0]" : ""}`}>{name}</Fit>
              </div>
              <div className={`${COL} ${bc}`}>{bid && <Fit w={bid.length > 4 ? 27 : 21}>{bid}</Fit>}</div>
              <div className={`${COL} ${ac}`}>{ask && <Fit w={ask.length > 4 ? 27 : 21}>{ask}</Fit>}</div>
              <div className={`flex grow justify-end pr-[4px] ${lc}`}><Fit w={lw}>{last}</Fit></div>
            </div>
          ))}
        </div>
        <MiniScroll track="mt-[4px]" thumb="h-[24px]" />
      </div>
      <div className="flex h-[21px] w-[279px] items-center border-t border-black pl-[3px] text-[12px] text-[#808080]">
        <div className="-mt-px flex h-[20px] w-[53px] items-center justify-center border border-t-0 border-black bg-white text-black"><Fit w={33}>Ativos</Fit></div>
        <Fit w={45} className="ml-[10px]">Detalhes</Fit>
        <div className="ml-[10px] h-3 w-px bg-[#808080]" />
        <Fit w={63} className="ml-[9px]">Negociação</Fit>
        <div className="ml-[10px] h-3 w-px bg-[#808080]" />
        <Fit w={25} className="ml-[10px]">Ticks</Fit>
      </div>
    </div>
  );
}

const DATA: [string, number, string, number][] = [
  ["BRFS3,H1", 49, "", 0], ["Date", 24, "2022.06.14", 54], ["Time", 26, "14:00", 27], ["Open", 29, "13.39", 27],
  ["High", 26, "13.48", 27], ["Low", 21, "13.26", 27], ["Close", 29, "13.28", 27], ["Volume", 40, "1164500", 42],
];

function DataWindow() {
  return (
    <div className="flex h-[171px] flex-col border-t border-[#a0a0a0] pt-[3px] pl-[3px]">
      <PanelTitle w={78}>Janela de dados</PanelTitle>
      <div className="flex h-[150px] w-[279px] overflow-hidden border-t border-l border-[#8a8a8a] bg-white text-[12px]">
        <div className="w-[261px] shrink-0">
          {DATA.map(([k, kw, v, vw], i) => (
            <div key={k} className={`flex h-[20px] items-center border-b border-[#c8c8c8] ${i % 2 ? "bg-[#eaeaea]" : "bg-white"}`}>
              <div className="flex h-full w-[140px] items-center border-r border-[#c8c8c8] pl-[2px]">
                <div className="w-[19px]">{i === 0 && <Svg box="0 0 16 16" className="h-4 w-4 text-[#1a7fc0]"><path d="M1 1v14h14" stroke="#999" /><path d="M3 8l4-4 3 4 5-4" /></Svg>}</div>
                <Fit w={kw}>{k}</Fit>
              </div>
              <div className="flex grow justify-end pr-[4px]">{v && <Fit w={vw}>{v}</Fit>}</div>
            </div>
          ))}
        </div>
        <MiniScroll track="mt-[5px]" thumb="h-[37px]" />
      </div>
    </div>
  );
}

const Wave = () => (
  <Svg box="0 0 14 12" className="h-3 w-[14px]"><path d="M1 11c2-1 2-9 5-9s2 7 4 7 1-7 3-8" stroke="#1a7fc0" /><path d="M1 6h3M6 9h2M9 4h4" stroke="#12a13a" strokeWidth={1.500} /></Svg>
);

const TREE: [string, number][] = [
  ["Moving Average", 87], ["Parabolic SAR", 73], ["Standard Deviation", 99], ["Triple Exponential Moving Avera", 171],
  ["Variable Index Dynamic Average", 170], ["Osciladores", 61], ["Average True Range", 105], ["Bears Power", 64],
];

function Navigator() {
  return (
    <div className="flex h-[197px] flex-col border-t border-[#a0a0a0] pt-[2px] pl-[3px]">
      <PanelTitle w={53}>Navegador</PanelTitle>
      <div className="flex h-[156px] w-[279px] overflow-hidden border-t border-l border-[#8a8a8a] bg-white text-[12px]">
        <div className="flex w-[261px] shrink-0">
          <div className="ml-[12px] w-px border-l border-dotted border-[#808080]" />
          <div className="ml-[20px] h-[160px] w-px border-l border-dotted border-[#808080]" />
          <div className="grow">
            {TREE.map(([t, w]) =>
              t === "Osciladores" ? (
                <div key={t} className="flex h-[20px] items-center">
                  <div className="-ml-[4px] flex h-[9px] w-[9px] items-center justify-center border border-[#9a9a9a] bg-white"><div className="h-px w-[5px] bg-[#1a4fa0]" /></div>
                  <div className="w-[6px] border-t border-dotted border-[#808080]" />
                  <Svg box="0 0 16 13" className="ml-[3px] h-[13px] w-4"><path d="M.5 12.500V.500h6l1 2.500h8v9.500z" fill="#fdc60a" stroke="#c98a00" /></Svg>
                  <Fit w={w} className="ml-[6px]">{t}</Fit>
                </div>
              ) : (
                <div key={t} className="ml-[20px] flex h-[20px] items-center border-l border-dotted border-[#808080]">
                  <div className="w-[11px] border-t border-dotted border-[#808080]" />
                  <div className="ml-[3px]"><Wave /></div>
                  <Fit w={w} className="ml-[6px]">{t}</Fit>
                </div>
              ),
            )}
          </div>
        </div>
        <MiniScroll track="mt-[14px]" thumb="h-[17px]" />
      </div>
      <div className="flex h-[22px] w-[279px] items-center border-t border-black pl-[3px] text-[12px] text-[#808080]">
        <div className="-mt-[2px] flex h-[20px] w-[64px] items-center justify-center border border-t-0 border-black bg-white text-black"><Fit w={43}>Comum</Fit></div>
        <Fit w={48} className="ml-[10px]">Favoritos</Fit>
      </div>
    </div>
  );
}

/* ------------------------------------------------------------------ */
/* Trading terminal: window and taskbar                                */
/* ------------------------------------------------------------------ */

const MENU: [string, number][] = [["Arquivo", 42], ["Exibir", 30], ["Inserir", 32], ["Gráficos", 43], ["Ferramentas", 65], ["Janela", 32], ["Ajuda", 31]];

const CHART_TABS: [string, number][] = [
  ["CSNA3,Daily", 66], ["ITUB4,Daily", 59], ["BBDC4,Weekly", 77], ["USIM5,Daily", 63], ["ITSA4,Daily", 58], ["GGBR4,Weekly", 77],
  ["MGLU3,Weekly", 80], ["SUZB3,Weekly", 75], ["CMIG4,Weekly", 77], ["WEGE3,Weekly", 78], ["SBSP3,Weekly", 73],
];

const STAT = "flex h-[18px] shrink-0 items-center border-l border-[#a0a0a0] pl-[5px]";

function AppTile({ active, running, children }: { active?: boolean; running?: boolean; children: React.ReactNode }) {
  return (
    <div className={`flex h-[40px] w-[49px] shrink-0 flex-col items-center justify-end ${active ? "bg-[#4a4d50]" : ""}`}>
      <div className="mb-[7px] flex h-[24px] items-center">{children}</div>
      <div className={`h-[2px] ${active ? "w-full bg-[#76b9ed]" : running ? "w-[40px] bg-[#76b9ed]" : "w-0"}`} />
    </div>
  );
}

function Taskbar() {
  return (
    <div className="flex h-[40px] items-center bg-linear-to-r from-[#1d1f23] via-[#2a2c2e] to-[#26282b] text-[#f0f0f0]">
      <Svg box="0 0 16 16" className="ml-4 h-4 w-4"><path d="M0 2.200l6.700-.9v6.400H0zM7.500 1.200L16 0v7.700H7.500zM0 8.400h6.700v6.400L0 13.900zM7.500 8.400H16V16l-8.500-1.200z" fill="#fff" stroke="none" /></Svg>
      <div className="ml-4 flex h-[39px] w-[344px] items-center border border-[#55585b] bg-[#323335]">
        <Svg box="0 0 18 18" className="ml-[10px] h-[17px] w-[17px]"><circle cx="11" cy="7" r="5.500" /><path d="M7 11l-6 6" /></Svg>
        <Fit w={175} className="ml-[12px] text-[14.500px] text-[#d8d8d8]">Digite aqui para pesquisar</Fit>
        <Svg box="0 0 50 32" className="ml-[64px] h-8 w-[50px]">
          <g stroke="none"><path d="M0 26C4 12 14 12 20 20l4 6z" fill="#7fbf6a" /><rect x="20" y="4" width="23" height="24" rx="3" fill="#e4e8ef" /><rect x="20" y="3" width="23" height="8" rx="2" fill="#4f74c9" /><path d="M7 3l2 4 4 1-4 2-2 4-2-4-4-2 4-1z" fill="#f6c445" /><path d="M41 30c-5-6-7-8-7-10a7 6 0 0114 0c0 2-2 4-7 10z" fill="#e2572b" /><circle cx="41" cy="20" r="2.500" fill="#7a2a10" /></g>
        </Svg>
      </div>
      <Svg box="0 0 16 16" className="ml-4 h-4 w-4"><path d="M1 1v2h8V1M1 15v-2h8v2M1 5.500h8v5H1zM13 1v3M13 8v7" /><path d="M12 5.500h2" strokeWidth={2} /></Svg>
      <div className="ml-[18px] flex">
        <AppTile running><Svg box="0 0 24 22" className="h-[20px] w-[22px]"><g stroke="none"><path d="M1 2h8l2 3h12v15H1z" fill="#f3c14b" /><path d="M5 20v-8h14v8h-4v-4H9v4z" fill="#4aa3e0" /></g></Svg></AppTile>
        <AppTile><Svg box="0 0 24 24" className="h-[22px] w-[22px]"><g stroke="none"><circle cx="12" cy="12" r="11.500" fill="#fff" /><path d="M12 .5A11.500 11.500 0 0122 6.300H12a5.700 5.700 0 00-5 3L2.300 5.800A11.500 11.500 0 0112 .5z" fill="#e33b2e" /><path d="M2.200 6L7 14.500a5.700 5.700 0 006 3.200l-3 5.600A11.500 11.500 0 012.200 6z" fill="#2da94f" /><path d="M22.200 6.500a11.500 11.500 0 01-12 17L15.500 16a5.700 5.700 0 00.5-9.500z" fill="#fdd043" /><circle cx="12" cy="12" r="5" fill="#3f7fe8" stroke="#fff" strokeWidth={1.200} /></g></Svg></AppTile>
        <AppTile running><Svg box="0 0 24 24" className="h-[23px] w-[23px]"><g stroke="none"><path d="M3 6c1 0 2 1 3 1 1-2 3-3 4-3 2-1 2-3 4-4 0 3 3 4 5 6 5 5 5 17-7 18C0 24-1 12 3 6z" fill="#ff7a1a" /><path d="M14 0c0 3 3 4 5 6 5 5 3 14-3 16 4-6 1-13-4-15 0-3 1-5 2-7z" fill="#ffcf3a" /><circle cx="11.500" cy="14" r="5" fill="#7a3fd0" /><path d="M4 11c4-1 6 0 8 2-2 2-5 2-7 1z" fill="#ff4a4a" /></g></Svg></AppTile>
        <AppTile><Svg box="0 0 24 24" className="h-[22px] w-[20px]"><g stroke="none"><path d="M9 5h14v15l-9 4z" fill="#e8a800" /><path d="M2 3l13-3v20L2 18z" fill="#fdc60a" /><path d="M11 5H7v4h4v5H6" fill="none" stroke="#fff" strokeWidth={2} /></g></Svg></AppTile>
        <AppTile active><TerminalIcon className="h-[24px] w-[24px]" /></AppTile>
        <AppTile running><div className="flex h-[22px] w-[22px] flex-col items-start border-2 border-[#c8f03a] bg-black pl-[2px] text-[8px] leading-[10px] font-bold text-white"><span>PC</span><div className="mt-[3px] h-px w-[6px] bg-white" /></div></AppTile>
        <AppTile><Svg box="0 0 24 24" className="h-[24px] w-[24px]"><g stroke="none"><path d="M17 .5L6 11 2.500 8 0 9.500v5L2.500 16 6 13l11 10.500L23 21V3z" fill="#2a94dc" /><path d="M17 7v10l-7-5z" fill="#26282b" /></g></Svg></AppTile>
        <AppTile running><div className="flex h-[21px] w-[24px] items-center rounded-sm bg-linear-to-b from-[#3a8fe0] to-[#173f8f]"><div className="flex h-[13px] w-[13px] items-center justify-center bg-[#1c57b8] text-[9px] font-bold text-white">W</div></div></AppTile>
      </div>
      <div className="ml-[166px] h-[19px] w-[19px] rounded-full bg-linear-to-br from-[#ffd76a] to-[#f28a10]" />
      <Fit w={29} className="ml-[11px] text-[13px]">22°C</Fit>
      <Fit w={68} className="ml-[9px] text-[13px]">Ensolarado</Fit>
      <Svg box="0 0 12 8" className="ml-[17px] h-2 w-3"><path d="M1 7l5-6 5 6" /></Svg>
      <Svg box="0 0 16 10" className="ml-[11px] h-[10px] w-4"><path d="M1 1h12v8H1zM14.500 4v2" /><path d="M3 3h5v4H3z" fill="#fff" stroke="none" /></Svg>
      <Svg box="0 0 14 14" className="ml-[10px] h-[14px] w-[14px]"><path d="M1 13A12 12 0 0113 1M4 13A9 9 0 0113 4.500M7 13a6 6 0 016-5.500" /><circle cx="12" cy="12" r="1.200" fill="#fff" /></Svg>
      <Svg box="0 0 16 14" className="ml-[6px] h-[14px] w-4"><path d="M1 5h3l4-4v12L4 9H1zM10 5c1 1 1 3 0 4M12 3c2 2 2 6 0 8" /></Svg>
      <div className="ml-[11px] flex w-[58px] flex-col items-center text-[12px] leading-[18px]"><Fit w={27}>11:42</Fit><Fit w={57}>17/06/2022</Fit></div>
      <Svg box="0 0 17 17" className="ml-[17px] h-[17px] w-[17px]"><path d="M1 1h15v11H9l-3 3v-3H1z" fill="#fff" /><path d="M4 4h9M4 6.500h9M4 9h5" stroke="#26282b" /><path d="M11 14a3 2.500 0 005-4" stroke="#fff" /></Svg>
      <div className="ml-[19px] h-full w-px bg-[#6a6a6a]" />
    </div>
  );
}

const TerminalIcon = ({ className }: { className: string }) => (
  <Svg box="0 0 24 24" className={className}>
    <rect x=".7" y=".7" width="22.600" height="22.600" rx="2" fill="#17212b" stroke="#4aa8e0" />
    <path d="M12 5c5 4 6 7 3 9M12 6l-6 11c3 3 9 3 12 0z" fill="#5f9a4a" stroke="#c7b53a" />
    <path d="M11 12l4 5H8z" fill="#2f6fb0" stroke="none" />
    <rect x="17" y="3" width="4" height="4" fill="#fff" stroke="none" />
  </Svg>
);

function TradingDesktop() {
  return (
    <div className="h-[768px] w-[1366px] origin-top-left scale-[0.78678] bg-[#f0f0f0] font-['Open_Sans',sans-serif] text-black">
      <div className="flex h-[23px] items-center bg-white text-[12px]">
        <TerminalIcon className="ml-[2px] h-4 w-4" />
        <Fit w={276} className="ml-[224px]">Netting - XP Investimentos CCTVM S/A - [BRFS3,H1]</Fit>
        <Svg box="0 0 10 10" className="ml-[727px] h-[10px] w-[10px]"><path d="M0 5h10" /></Svg>
        <Svg box="0 0 10 10" className="ml-[35px] h-[10px] w-[10px]"><path d="M.5 2.500h7v7h-7zM2.500 2.500v-2h7v7h-2" /></Svg>
        <Svg box="0 0 10 10" className="ml-[36px] h-[10px] w-[10px]"><path d="M0 0l10 10M10 0L0 10" /></Svg>
      </div>
      <div className="flex h-[21px] items-center border-b border-[#a0a0a0] text-[12px]">
        <Svg box="0 0 14 14" className="ml-[6px] h-[14px] w-[14px] text-[#12a13a]"><path d="M1 4h4v6H1zM9 3h4v7H9zM3 1v3M3 10v3M11 0v3M11 10v4" /></Svg>
        <div className="ml-[12px] flex gap-[22px]">{MENU.map(([m, w]) => <Fit key={m} w={w}>{m}</Fit>)}</div>
        <div className="ml-[876px] flex items-center gap-[10px] text-[#b0b0b0]">
          <div className="mt-[5px] h-[2px] w-2 bg-current" />
          <Svg box="0 0 8 8" className="h-2 w-2"><path d="M.8 2.800h4v4.400h-4zM3 1h4.200v4.500" strokeWidth={1.500} /></Svg>
          <Svg box="0 0 7 7" className="h-[7px] w-[7px]"><path d="M1 1l5 5M6 1L1 6" strokeWidth={2} /></Svg>
        </div>
      </div>
      <div className="flex h-[93px] flex-col pt-px">
        <MainToolbar />
        <DrawToolbar />
        <FrameToolbar />
      </div>
      <div className="flex h-[568px]">
        <div className="flex w-[287px] flex-col border-t border-[#a0a0a0]">
          <MarketWatch />
          <DataWindow />
          <Navigator />
        </div>
        <div className="flex w-[1079px] flex-col">
          <PriceChart />
          <div className="flex h-[20px] items-center border-l border-[#808080] pl-[13px] text-[12px] text-[#707070]">
            {CHART_TABS.map(([t, w], i) => (
              <div key={t} className="flex items-center">
                {i > 0 && <div className="mx-[11px] h-[14px] w-px bg-[#808080]" />}
                <Fit w={w}>{t}</Fit>
              </div>
            ))}
            <Svg box="0 0 4 8" className="ml-[13px] h-2 w-[4px]"><path d="M4 0v8L0 4z" fill="#c0c0c0" stroke="none" /></Svg>
            <Svg box="0 0 4 8" className="ml-[17px] h-2 w-[4px]"><path d="M0 0v8l4-4z" fill="#000" stroke="none" /></Svg>
          </div>
        </div>
      </div>
      <div className="flex h-[23px] items-center border-t border-white bg-[#f0f0f0] text-[12px]">
        <Fit w={127} className="ml-[2px]">Para Ajuda, pressione F1</Fit>
        <div className={`${STAT} ml-[544px] w-[128px]`}><Fit w={38}>Default</Fit></div>
        <div className={`${STAT} w-[98px]`}><Fit w={85}>2022.06.14 14:00</Fit></div>
        <div className={`${STAT} w-[71px]`}><Fit w={42}>O: 13.39</Fit></div>
        <div className={`${STAT} w-[71px]`}><Fit w={42}>H: 13.48</Fit></div>
        <div className={`${STAT} w-[68px]`}><Fit w={40}>L: 13.26</Fit></div>
        <div className={`${STAT} w-[70px]`}><Fit w={41}>C: 13.28</Fit></div>
        <div className={`${STAT} w-[66px]`} />
        <div className={STAT}>
          <Svg box="0 0 14 11" className="h-[11px] w-[14px] text-[#12a13a]"><path d="M1 10.500v-2M4 10.500v-3.500M7 10.500V5.500M10 10.500v-7.500M13 10.500V1" strokeWidth={1.800} strokeLinecap="butt" /></Svg>
          <Fit w={58} className="ml-[6px]">1009 / 4 Kb</Fit>
        </div>
      </div>
      <Taskbar />
    </div>
  );
}

/* ------------------------------------------------------------------ */
/* Browser chrome                                                      */
/* ------------------------------------------------------------------ */

const UdemyBadge = () => (
  <Svg className="h-4 w-4"><circle cx="8" cy="8" r="8" fill="#a435f0" stroke="none" /><path d="M5.700 7v3.200a2.300 2.300 0 004.600 0V7M5.600 4.800L8 3.200l2.400 1.600" stroke="#fff" strokeWidth={1.500} strokeLinejoin="miter" /></Svg>
);
const Globe = () => (
  <Svg className="h-4 w-4"><circle cx="8" cy="8" r="6.900" strokeWidth={1.300} /><path d="M1 8h14" strokeWidth={1.200} /><ellipse cx="8" cy="8" rx="3.400" ry="6.900" strokeWidth={1.200} /></Svg>
);
const Folder = () => (
  <Svg className="h-4 w-4"><path d="M1.100 2.800a1.600 1.600 0 011.600-1.600h2.400a1.600 1.600 0 011.200.5l1.200 1.400h5.800a1.600 1.600 0 011.600 1.600v7a1.600 1.600 0 01-1.600 1.600H2.700a1.600 1.600 0 01-1.600-1.600z" strokeWidth={1.200} /></Svg>
);
const Cptm = () => (
  <Svg className="h-4 w-4"><g fill="#fb0005" stroke="none"><path d="M5 .8h4.100l6.600 7-3.600 3.600H8l3.600-4z" /><path d="M10.500 14.400H6.600L0 7.800l3.600-3.900h4.100L4.200 7.700z" /></g></Svg>
);
const Shield = () => (
  <Svg className="h-4 w-4"><g stroke="none"><path d="M1 0h14v10c0 3-4 5-7 6-3-1-7-3-7-6z" fill="#d8572a" /><path d="M6.500 0h3v16l-1.500 0-1.500-.5z" fill="#fff" /><path d="M1 5.500h14v3H1z" fill="#fff" /><path d="M2.500 1.500h3v2.500h-3zM10.500 1.500h3v2.500h-3zM2.500 10h3v2.500h-3zM10.500 10h3v2.500h-3z" fill="#f1b434" /><path d="M7 6h2v2H7z" fill="#d8572a" /></g></Svg>
);

const BOOKMARKS: [() => React.JSX.Element, string, number, string, string][] = [
  [Globe, "Introdução", 56.3, "", "ml-[4px]"],
  [Folder, "Artigos Científicos", 95, "ml-[13.2px]", "ml-[4.2px]"],
  [UdemyBadge, "Cursos online - apren...", 122, "ml-[12.2px]", "ml-[7px]"],
  [Folder, "Python", 36.2, "ml-[15.5px]", "ml-[4px]"],
  [Cptm, "Intranet Home CPTM", 110, "ml-[12px]", "ml-[5px]"],
  [Shield, "Cambridge Dicionário ...", 126.6, "ml-[12.4px]", "ml-[5.4px]"],
  [Folder, "Investimentos", 73, "ml-[12.5px]", "ml-[4px]"],
  [Globe, "Portal de Educação a ...", 122, "ml-[12.8px]", "ml-[6.4px]"],
];

function BrowserChrome() {
  return (
    <div className="h-[113px] border-b border-[#0c0c0d] bg-[#2b2a33] font-['Open_Sans',sans-serif] text-[#fbfbfe]">
      <div className="flex h-[44px] items-center bg-[#1c1b22]">
        <div className="ml-[2px] flex h-[36px] w-[221px] items-center rounded bg-[#42414d] pl-2 shadow-[0_0_4px_rgba(0,0,0,0.4)]">
          <UdemyBadge />
          <div className="mt-[1px] ml-[5.500px] w-[171px] overflow-hidden mask-r-from-85% text-[12px] text-[#b8b8bf]"><Fit w={170}>Time Series Analysis, Forecasting</Fit></div>
          <Svg className="ml-[0.500px] h-[8px] w-[8px]" box="0 0 8 8"><path d="M.5.500l7 7M7.500.500l-7 7" strokeWidth={1.100} /></Svg>
        </div>
        <Svg box="0 0 12 12" className="mt-px ml-[15.500px] h-3 w-3"><path d="M6 .5v11M.5 6h11" strokeWidth={1.200} /></Svg>
        <div className="ml-[909px] flex items-center gap-9 text-[#8f8f96]">
          <div className="h-px w-[10px] bg-current" />
          <Svg box="0 0 10 10" className="h-[10px] w-[10px]"><path d="M.5 2.500h7v7h-7zM2.500 2.500v-2h7v7h-2" strokeLinejoin="miter" /></Svg>
          <Svg box="0 0 10 10" className="h-[10px] w-[10px]"><path d="M0 0l10 10M10 0L0 10" strokeWidth={0.800} /></Svg>
        </div>
      </div>
      <div className="flex h-[40px] items-center">
        <Svg className="ml-4 h-4 w-4"><path d="M15 8.500H1.600M7 2.500l-5.800 6 5.800 6" strokeWidth={1.300} /></Svg>
        <Svg className="ml-5 h-4 w-4 text-[#807f87]"><path d="M1 8.500h13.400M9 2.500l5.800 6-5.800 6" strokeWidth={1.300} /></Svg>
        <Svg className="ml-5 h-4 w-4"><path d="M14.400 10.500A6.600 6.600 0 118 2c2.200 0 4 1 5.200 2.600" strokeWidth={1.400} /><path d="M14.800 1.200v5.200H9.600z" fill="currentColor" stroke="none" /></Svg>
        <Svg className="ml-5 h-4 w-4"><path d="M1 8.500L8 1.300l7 7.200M2.500 7.500v6.400a1 1 0 001 1h9a1 1 0 001-1V7.500M6.300 14.500v-4a1.700 1.700 0 013.400 0v4" strokeWidth={1.300} /></Svg>
        <div className="ml-[53px] flex h-8 w-[534px] items-center rounded bg-[#1c1b22] pl-2">
          <svg viewBox="0 0 16 16" className="block h-4 w-4 shrink-0" fill="none" strokeWidth={1.300}>
            <defs><linearGradient id="shield" x1="0" y1="1" x2="1" y2="0"><stop offset="0.2" stopColor="#20c5fd" /><stop offset="1" stopColor="#b59cff" /></linearGradient></defs>
            <path d="M8 .8L15 4c0 5-1.500 9-7 11.300C2.500 13 1 9 1 4z" stroke="url(#shield)" strokeLinejoin="round" />
          </svg>
          <Svg className="ml-3 h-4 w-4"><rect x="2.800" y="7.500" width="10.600" height="7.800" rx="1.200" strokeWidth={1.400} /><path d="M4.300 7.500V4.500a3.800 3.800 0 017.600 0v3" strokeWidth={1.400} /></Svg>
          <Svg className="ml-3 h-4 w-4"><path d="M1.500 5.500h7M8 10.500h7" strokeWidth={1.500} /><circle cx="12" cy="5.500" r="2.200" strokeWidth={1.400} /><circle cx="4" cy="10.500" r="2.200" strokeWidth={1.400} /></Svg>
          <div className="mt-[1.500px] ml-[10.200px] w-[417px] overflow-hidden mask-r-from-95% text-[13.500px] text-[#8f8f96]">
            <Fit w={414}>https://www.<span className="text-[#fbfbfe]">udemy.com</span>/course/time-series-analysis/learn/lecture/2</Fit>
          </div>
          <Svg className="ml-[2.300px] h-4 w-4"><path d="M8 1l2 4.600 5 .6-3.700 3.400 1 5.200L8 12.200l-4.300 2.600 1-5.200L1 6.200l5-.6z" strokeWidth={1.300} /></Svg>
        </div>
        <div className="ml-[10px] flex h-8 w-[206px] items-center rounded bg-[#1c1b22] pl-[9.500px]">
          <Svg className="h-4 w-4"><circle cx="6.500" cy="6" r="5.200" strokeWidth={1.300} /><path d="M10.300 10l4.700 4.700" strokeWidth={1.300} /></Svg>
          <Fit w={57} className="mt-[1.500px] ml-[5.500px] text-[13.500px] text-[#b0b0b6]">Pesquisar</Fit>
        </div>
        <div className="ml-[53px] flex items-center gap-5">
          <Svg className="h-4 w-4"><path d="M2.500 2h11a1.500 1.500 0 011.500 1.500V8a7 6.500 0 01-14 0V3.500A1.500 1.500 0 012.500 2z" strokeWidth={1.300} /><path d="M4.700 6.500L8 9.700l3.300-3.200" strokeWidth={1.400} /></Svg>
          <Svg className="h-4 w-4"><path d="M8 .7v10M3.700 6.700L8 11l4.300-4.300M1.500 12.500v1.200a1.500 1.500 0 001.500 1.500h10a1.500 1.500 0 001.500-1.500v-1.200" strokeWidth={1.300} /></Svg>
          <Svg className="h-4 w-4"><path d="M2 1.500v13.300M5.300 4v10.800M8.600 4v10.800M11.300 4l3.500 10.800" strokeWidth={1.300} /></Svg>
          <div className="flex h-4 w-4 items-center justify-center rounded-full bg-[#fbfbfe] text-[9.500px] font-bold text-[#2b2a33]">M</div>
          <div className="relative h-4 w-4 bg-[#4d4d4f] text-[#2f2e36]">
            <span className="absolute bottom-0 left-[1.500px] text-[9px] leading-[9px] font-semibold">Se</span>
            <div className="absolute top-[2px] right-[2px] h-[3px] w-[5px] bg-current" />
          </div>
          <div className="relative h-4 w-4">
            <Svg className="h-4 w-4"><circle cx="8" cy="8.500" r="5" fill="#0a6fd0" stroke="none" /><circle cx="8" cy="8.500" r="6.200" stroke="#0a6fd0" strokeWidth={2.800} strokeDasharray="3 1.870" strokeLinecap="butt" /><circle cx="8" cy="7.500" r="3.600" stroke="#7ab8f0" strokeWidth={0.800} /><path d="M4.500 7.500h7M8 4v7" stroke="#7ab8f0" strokeWidth={0.800} /></Svg>
            <div className="absolute -top-[5px] left-0 h-[11px] w-5 overflow-hidden rounded-[2px] border-y border-t-[#e23a3a] border-b-[#c00000] bg-[#d90000] pl-[2px] text-[9.500px] leading-[9px] font-bold text-white"><Fit w={20}>New</Fit></div>
          </div>
          <div className="relative h-4 w-4">
            <Svg className="h-4 w-4"><path d="M8 .8L14 3v5c0 4-3 6.500-6 8-3-1.500-6-4-6-8V3z" fill="#129b7b" stroke="none" /><path d="M8 .8V16c-3-1.500-6-4-6-8V3z" fill="#15b58f" stroke="none" /><path d="M5.500 8l2 2 3.500-4.500" stroke="#fff" /></Svg>
            <div className="absolute -top-[5px] left-[4.500px] flex h-[11px] w-[16px] items-center justify-center rounded-[2px] bg-[#0d3f38] text-[10px] leading-[9px] font-bold text-white">49</div>
          </div>
          <Svg className="h-4 w-4"><path d="M2.500 3.500h11M2.500 7.500h11M2.500 11.500h11" strokeWidth={1.300} /></Svg>
        </div>
      </div>
      <div className="flex h-[28px] items-center pt-[1.500px] pl-[12.200px] text-[12px]">
        {BOOKMARKS.map(([Icon, label, w, before, gap]) => (
          <div key={label} className={`flex items-center ${before}`}><Icon /><Fit w={w} className={gap}>{label}</Fit></div>
        ))}
        <Svg box="0 0 14 12" className="ml-[123.500px] h-3 w-[14px]"><path d="M1 .8L6 6l-5 5.200M7.500.800l5 5.200-5 5.200" strokeWidth={1.300} /></Svg>
        <div className="ml-[13px] flex items-center"><Folder /><Fit w={85} className="ml-[4px]">Outros favoritos</Fit></div>
      </div>
    </div>
  );
}

/* ------------------------------------------------------------------ */
/* Course page                                                         */
/* ------------------------------------------------------------------ */

function CourseHeader() {
  return (
    <div className="flex h-[56px] items-center border-b border-[#3e4143] bg-[#1c1d1f] pl-[15.700px] text-[14px] text-white">
      <div className="relative h-[55px] w-[92px]">
        <Svg box="0 0 14.500 8" className="absolute top-[10.300px] left-0 h-2 w-[14.500px]"><path d="M7.250 0L14.500 4.200V8L7.250 4 0 8V4.200z" fill="#a435f0" stroke="none" /></Svg>
        <Fit w={92} className="mt-[10.700px] -ml-[1px] text-[29px] leading-[32px] font-bold">udemy</Fit>
      </div>
      <div className="ml-[23px] h-[22px] w-px bg-[#3e4143]" />
      <Fit w={353.300} className="-mt-[0.500px] ml-[23.700px]">Time Series Analysis, Forecasting, and Machine Learning</Fit>
      <div className="ml-[376.500px] flex items-center">
        <svg viewBox="0 0 35 35" className="block h-[35px] w-[35px] shrink-0" fill="none" strokeWidth={2.300}>
          <circle cx="17.500" cy="17.500" r="16.300" stroke="#3e4143" />
          <path d="M17.500 1.200a16.300 16.300 0 0116.300 16.300" stroke="#cec0fc" />
          <g stroke="#6a6f73" strokeWidth={1.700}><path d="M13.500 11h8v5.500c0 2.300-1.700 4-4 4s-4-1.700-4-4zM13.500 12.300h-2.600v2c0 1.800 1.200 3 2.800 3M21.500 12.300h2.600v2c0 1.800-1.200 3-2.800 3M17.500 20.500v4M13.800 24.800h7.400" /></g>
        </svg>
        <Fit w={91} className="ml-2">Seu progresso</Fit>
        <Svg box="0 0 10 7" className="ml-[8.500px] h-[7px] w-[10px]"><path d="M1 1l4 4 4-4" strokeWidth={1.700} strokeLinecap="butt" strokeLinejoin="miter" /></Svg>
      </div>
      <div className="ml-[29px] flex h-10 w-[132px] items-center border border-white pl-3 font-bold">
        <Fit w={85.500}>Compartilhar</Fit>
        <Svg box="0 0 15 12" className="ml-[4.500px] h-[12px] w-[15px]"><path d="M9 0l6 5.500L9 11V7.600C5 7.600 2 9 0 12c.5-4.500 3.500-8 9-8.600z" fill="#fff" stroke="none" /></Svg>
      </div>
      <div className="ml-2 flex h-10 w-10 flex-col items-center justify-center gap-[1.700px] border border-white">
        {[0, 1, 2].map((i) => <div key={i} className="h-[3.300px] w-[3.300px] rounded-full bg-white" />)}
      </div>
    </div>
  );
}

const LECTURES: [string, number, string, number][] = [
  ["40. ARIMA Section Introduction", 197, "5m", 16.7],
  ["41. Autoregressive Models - AR(p)", 209.3, "13m", 21.3],
  ["42. Moving Average Models - MA(q)", 220.5, "4m", 16.7],
  ["43. ARIMA", 65.7, "11m", 19],
  ["44. ARIMA in Code", 117, "19m", 21.8],
  ["45. Stationarity", 95.3, "13m", 21.3],
  ["46. Stationarity in Code", 147, "10m", 22],
  ["47. ACF (Autocorrelation Function)", 213.7, "10m", 22],
  ["48. ACF in Code", 104, "7m", 16.7],
];

const ArrowUp = ({ className = "" }) => <Svg box="0 0 9 7" className={`h-[7px] w-[9px] text-[#606060] ${className}`}><path d="M.3 6.800V4.300L4.500 0l4.200 4.300v2.500L4.500 2.700z" fill="currentColor" stroke="none" /></Svg>;
const ArrowDown = ({ className = "" }) => <Svg box="0 0 9 7" className={`h-[7px] w-[9px] text-[#606060] ${className}`}><path d="M.3.200v2.500L4.500 7l4.200-4.300V.200L4.500 4.300z" fill="currentColor" stroke="none" /></Svg>;

function Curriculum() {
  return (
    <div className="flex w-[316px] shrink-0 flex-col border-t border-l border-[#d1d7dc] bg-white text-[#1c1d1f]">
      <div className="flex h-[53px] shrink-0 items-center justify-between border-b border-[#d1d7dc] pr-[20px] pl-[16.300px]">
        <Fit w={140.500} className="text-[16px] font-bold">Conteúdo do curso</Fit>
        <Svg box="0 0 12 12" className="h-3 w-3"><path d="M1 1l10 10M11 1L1 11" strokeWidth={1.700} strokeLinecap="butt" /></Svg>
      </div>
      <div className="mt-px flex h-[495px] overflow-hidden">
        <div className="w-[297px] shrink-0">
          {LECTURES.map(([title, w, time, tw], i) => (
            <div key={title} className="flex h-[60.400px] flex-col">
              <div className={`flex h-[59.700px] pl-[16.300px] ${i === 0 ? "bg-[#d1d7dc]" : ""}`}>
                <div className="mt-[9.300px] h-4 w-4 shrink-0 border-2 border-[#1c1d1f]" />
                <div className="ml-4 pt-[6.800px]">
                  <Fit w={w} className="text-[14px] leading-[20px]">{title}</Fit>
                  <div className={`mt-[6px] flex items-center text-[12px] leading-[20px] ${i === 0 ? "text-[#1c1d1f]" : "text-[#6a6f73]"}`}>
                    <Svg box="0 0 14 14" className="ml-[1px] h-[13.500px] w-[13.500px]"><circle cx="7" cy="7" r="7" fill="currentColor" stroke="none" /><path d="M5.200 4v6l4.800-3z" fill={i === 0 ? "#d1d7dc" : "#fff"} stroke="none" /></Svg>
                    <Fit w={tw} className="mt-[0.500px] ml-[5.500px]">{time}</Fit>
                  </div>
                </div>
              </div>
            </div>
          ))}
        </div>
        <div className="flex w-[17px] shrink-0 flex-col items-center justify-between bg-[#f0f0f0]">
          <div className="flex w-full flex-col items-center">
            <ArrowUp className="mt-[4.500px]" />
            <div className="mt-[73px] h-[76.500px] w-full bg-[#cdcdcd]" />
          </div>
          <ArrowDown className="mb-[4.500px]" />
        </div>
        <div className="w-px bg-[#f8f9fb]" />
      </div>
    </div>
  );
}

function Player() {
  return (
    <div className="relative flex h-[400px] justify-center bg-[#1c1d1f]">
      <div className="relative h-full w-[712px] overflow-hidden bg-[#010101] font-[Roboto,sans-serif] text-black">
        <div className="flex flex-col items-center pt-[128px]">
          <Fit w={142} className="text-[38px] leading-[46px]">Time Series</Fit>
          <Fit w={106} className="text-[38px] leading-[46px]">Analysis</Fit>
          <Fit w={160} className="mt-[28px] text-[20px] leading-[30px]">By: The Lazy Programmer</Fit>
        </div>
        <div className="absolute right-[3px] bottom-[5px] flex items-center text-[#808080]">
          <Svg box="0 0 10 9" className="h-[8.500px] w-[9.500px]"><path d="M.6 4.200C2 3.500 3 2 3.300.9 2.500 3.500 1.600 6 1.900 7.300c.5 1.500 3 .5 4.800-4.800C6 5 5.800 6.500 6.500 6.900c.8.200 2-.6 2.900-1.900" strokeWidth={1.500} /></Svg>
          <Fit w={17} className="ml-[1.500px] font-[Lato] text-[5.600px] leading-[8px] font-bold">Udemy</Fit>
        </div>
      </div>
      <Svg box="0 0 96 96" className="absolute top-[152px] left-[425.500px] h-24 w-24"><circle cx="48" cy="48" r="48" fill="#1c1d1f" stroke="none" /><path d="M33.300 23.300v49.400L72 48z" fill="#fff" stroke="none" /></Svg>
      <div className="absolute top-[240px] left-[889.300px] flex h-10 w-10 items-center justify-center rounded-full border border-[#272727] bg-[#141414] text-[#d4d4d4] shadow-[0_3px_6px_rgba(0,0,0,0.35)]">
        <Svg box="0 0 24 20" className="h-5 w-6"><path d="M13 19H2.500A1.500 1.500 0 011 17.500v-15A1.500 1.500 0 012.500 1h17A1.500 1.500 0 0121 2.500V9.500" strokeWidth={1.900} /><path d="M5.500 5.500l5 5" strokeWidth={1.900} /><path d="M12.300 8v4.500H7.800z" fill="currentColor" /><rect x="15.500" y="12.200" width="8.500" height="7.300" rx="1.200" fill="currentColor" stroke="none" /></Svg>
      </div>
    </div>
  );
}

const TABS: [string, number, string][] = [
  ["Perguntas e respostas", 165.400, "ml-[20.600px]"],
  ["Observações", 97, "ml-6"],
  ["Anúncios", 69, "ml-6"],
  ["Avaliações", 79.500, "ml-[23.500px]"],
  ["Ferramentas de aprendizado", 212.900, "ml-6"],
];

function CoursePage() {
  return (
    <div className="flex h-[607px] font-[Inter,sans-serif]">
      <div className="flex w-[1263px] flex-col">
        <CourseHeader />
        <div className="flex h-[551px]">
          <div className="w-[947px] shrink-0 overflow-hidden bg-white text-[#1c1d1f]">
            <Player />
            <div className="mx-4 flex h-[50px] items-end border-b border-[#d1d7dc] text-[16px] font-bold text-[#6a6f73]">
              <Svg box="0 0 15 15" className="mb-[18px] ml-[22px] h-[15px] w-[15px]"><circle cx="5.700" cy="5.700" r="4.700" strokeWidth={1.700} /><path d="M9.300 9.300l5 5" strokeWidth={1.900} strokeLinecap="butt" /></Svg>
              <div className="-mb-px ml-[23px] flex h-[44px] w-[89.700px] justify-center border-b-2 border-[#1c1d1f] text-[#1c1d1f]"><Fit w={81.700} className="pt-[5.800px]">Visão geral</Fit></div>
              {TABS.map(([t, w, ml]) => <Fit key={t} w={w} className={`mb-[13.200px] ${ml}`}>{t}</Fit>)}
            </div>
            <div className="pl-10">
              <Fit w={189.500} className="mt-[47px] text-[24px] leading-[32px] font-bold">Sobre este curso</Fit>
              <Fit w={552} className="mt-[14.500px] text-[14px] leading-[20px]">Python for LSTMs, ARIMA, Deep Learning, AI, Support Vector Regression, +More!</Fit>
            </div>
          </div>
          <Curriculum />
        </div>
      </div>
      <div className="flex w-[17px] flex-col items-center justify-between bg-[#f0f0f0]">
        <div className="flex w-full flex-col items-center">
          <ArrowUp className="mt-[4.500px]" />
          <div className="mt-[5.500px] h-[186px] w-full bg-[#cdcdcd]" />
        </div>
        <ArrowDown className="mb-[4px]" />
      </div>
    </div>
  );
}

export default function App() {
  return (
    <div className="flex h-[1699px] w-[4096px] overflow-hidden bg-black">
      <div className="h-full w-[1074.750px] shrink-0 overflow-hidden">
        <TradingDesktop />
      </div>
      <div className="h-full w-[3021.250px] shrink-0 overflow-hidden">
        <div className="h-[720px] w-[1280px] origin-top-left scale-[2.36035] bg-white">
          <BrowserChrome />
          <CoursePage />
        </div>
      </div>
    </div>
  );
}
